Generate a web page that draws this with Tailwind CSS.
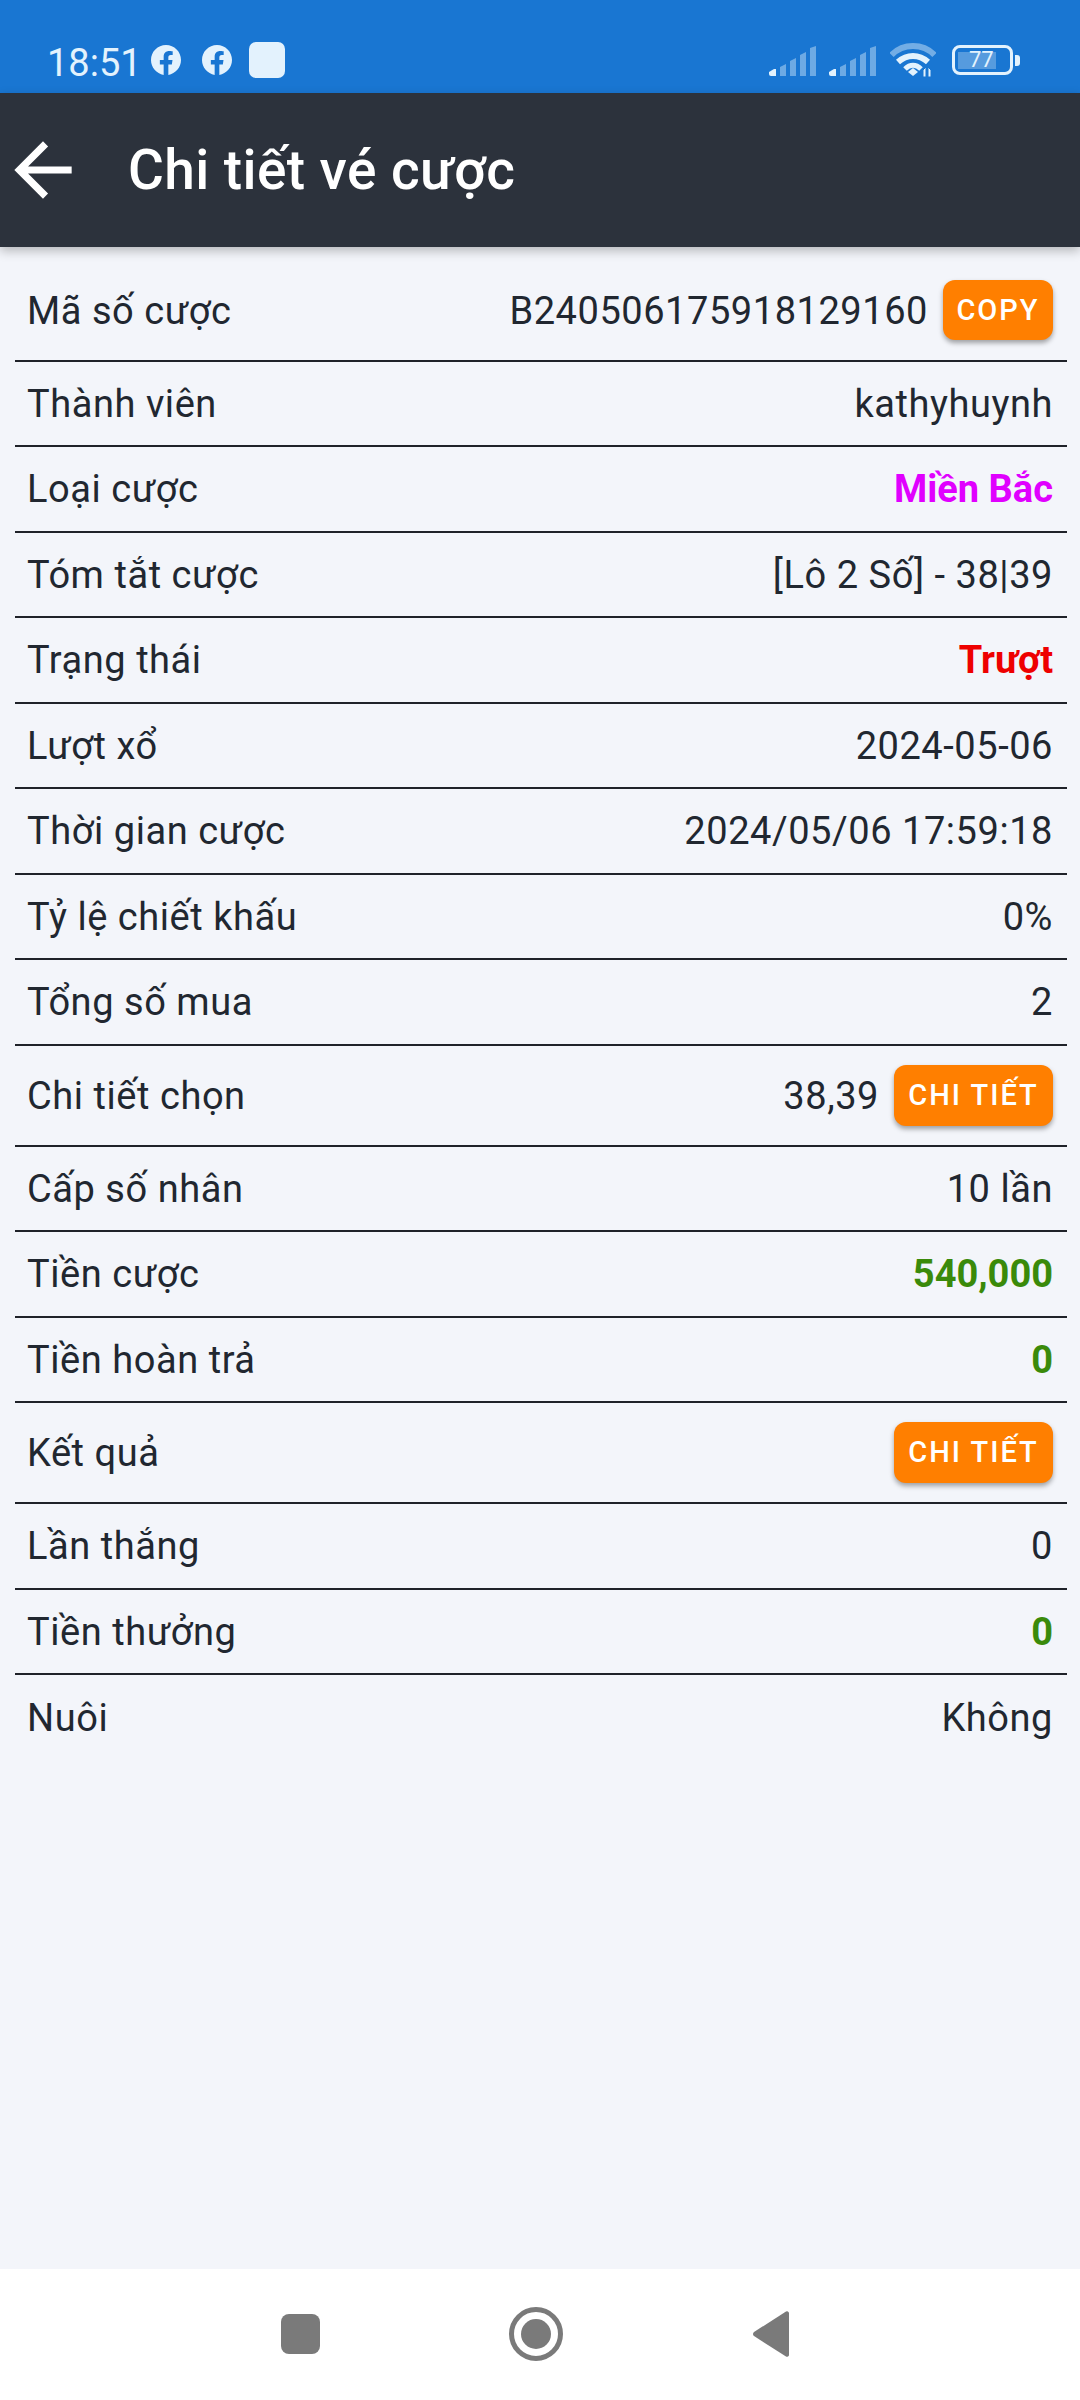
<!DOCTYPE html>
<html lang="vi">
<head>
<meta charset="UTF-8">
<meta name="viewport" content="width=device-width, initial-scale=1.0">
<title>Chi tiết vé cược</title>
<script src="https://cdn.jsdelivr.net/npm/@tailwindcss/browser@4"></script>
</head>
<body class="bg-[#f3f5fa] font-['Roboto',sans-serif] text-[#212730]">
<div class="w-[1080px] h-[2400px] flex flex-col overflow-hidden">

  <!-- status bar -->
  <div class="h-[93px] bg-[#1976d2] flex items-start pt-[42px] pl-[47px] pr-[60px] text-[#e3f2fd] shrink-0">
    <span class="text-[38px] leading-[38px] w-[89px] mt-[2px]">18:51</span>
    <svg class="w-[30px] h-[30px] ml-[15px] mt-[3px]" viewBox="0 0 24 24" fill="#e3f2fd"><path d="M24 12.073c0-6.627-5.373-12-12-12s-12 5.373-12 12c0 5.99 4.388 10.954 10.125 11.854v-8.385H7.078v-3.47h3.047V9.43c0-3.007 1.792-4.669 4.533-4.669 1.312 0 2.686.235 2.686.235v2.953H15.83c-1.491 0-1.956.925-1.956 1.874v2.25h3.328l-.532 3.47h-2.796v8.385C19.612 23.027 24 18.062 24 12.073z"/></svg>
    <svg class="w-[30px] h-[30px] ml-[21px] mt-[3px]" viewBox="0 0 24 24" fill="#e3f2fd"><path d="M24 12.073c0-6.627-5.373-12-12-12s-12 5.373-12 12c0 5.99 4.388 10.954 10.125 11.854v-8.385H7.078v-3.47h3.047V9.43c0-3.007 1.792-4.669 4.533-4.669 1.312 0 2.686.235 2.686.235v2.953H15.83c-1.491 0-1.956.925-1.956 1.874v2.25h3.328l-.532 3.47h-2.796v8.385C19.612 23.027 24 18.062 24 12.073z"/></svg>
    <div class="w-[36px] h-[36px] ml-[17px] rounded-[7px] bg-[#e3f2fd]"></div>

    <div class="ml-auto flex items-start">
      <svg class="w-[48px] h-[30px] mt-[4px]" viewBox="0 0 48 30">
        <path d="M0 26l5-3h2v7H2a2 2 0 0 1-2-2z" fill="#e3f2fd"/>
        <g fill="#e3f2fd" fill-opacity=".42">
          <path d="M11 21l6-3v12h-6z"/><path d="M21 15l6-3v18h-6z"/><path d="M31 9l6-3v24h-6z"/><path d="M41 2l6-2v30h-6z"/>
        </g>
      </svg>
      <svg class="w-[48px] h-[30px] mt-[4px] ml-[12px]" viewBox="0 0 48 30">
        <path d="M0 26l5-3h2v7H2a2 2 0 0 1-2-2z" fill="#e3f2fd"/>
        <g fill="#e3f2fd" fill-opacity=".42">
          <path d="M11 21l6-3v12h-6z"/><path d="M21 15l6-3v18h-6z"/><path d="M31 9l6-3v24h-6z"/><path d="M41 2l6-2v30h-6z"/>
        </g>
      </svg>
      <svg class="w-[46px] h-[34px] ml-[13px] mt-[1px]" viewBox="0 0 46 34" fill="none" stroke-width="6">
        <path d="M1.5 12C13 0 33 0 44.5 12" stroke="#e3f2fd" stroke-opacity=".45"/>
        <path d="M8 19C17 11 29 11 38 19" stroke="#e3f2fd"/>
        <path d="M15 26C20 21 26 21 31 26" stroke="#e3f2fd" stroke-width="5"/>
        <path d="M18 29l5-4 5 4-5 4z" fill="#e3f2fd"/>
        <path d="M33 27l3-3v10h-3zM38 24l3 3h3l-3 0v7h-3z" fill="#e3f2fd" stroke="#1976d2" stroke-width="1"/>
      </svg>
      <div class="ml-[16px] mt-[3px] w-[61px] h-[30px] rounded-[8px] border-[3px] border-[#e3f2fd] relative flex items-center">
        <div class="absolute left-[3px] top-[4px] h-[17px] w-[38px] bg-[#e3f2fd]/30"></div>
        <span class="relative ml-[14px] text-[22px] leading-none">77</span>
      </div>
      <div class="ml-[2px] mt-[13px] w-[5px] h-[11px] rounded-r-[3px] bg-[#e3f2fd]"></div>
    </div>
  </div>

  <!-- app bar -->
  <header class="h-[154px] bg-[#2c323c] shadow-[0_4px_10px_rgba(0,0,0,0.25)] flex items-center text-white shrink-0 relative">
    <svg class="w-[86px] h-[86px] ml-0" viewBox="0 0 24 24" fill="currentColor"><path d="M20 11H7.83l5.59-5.59L12 4l-8 8 8 8 1.41-1.41L7.83 13H20v-2z"/></svg>
    <h1 class="ml-[42px] text-[55px] leading-none font-medium tracking-[0.41px]">Chi tiết vé cược</h1>
  </header>

  <!-- detail rows -->
  <main class="flex-1 pl-[15px] pr-[13px] pt-[13.5px] text-[38px] leading-[44px] tracking-[0.55px]">
    <div class="h-[101px] pt-[1px] flex items-center justify-between border-b-2 border-[#1f2229] pl-[12px] pr-[14px]">
      <span>Mã số cược</span>
      <div class="flex items-center gap-[15px]">
        <span>B240506175918129160</span>
        <button class="-mt-[1px] pb-[1px] h-[60px] w-[110px] rounded-[12px] bg-[#ff7f00] text-white text-[29px] font-medium tracking-[2px] shadow-[0_3px_5px_rgba(0,0,0,0.35)]">COPY</button>
      </div>
    </div>
    <div class="h-[85.5px] pt-[1px] flex items-center justify-between border-b-2 border-[#1f2229] pl-[12px] pr-[14px]"><span>Thành viên</span><span>kathyhuynh</span></div>
    <div class="h-[85.5px] pt-[1px] flex items-center justify-between border-b-2 border-[#1f2229] pl-[12px] pr-[14px]"><span>Loại cược</span><span class="font-bold tracking-normal text-[#e000ff]">Miền Bắc</span></div>
    <div class="h-[85.5px] pt-[1px] flex items-center justify-between border-b-2 border-[#1f2229] pl-[12px] pr-[14px]"><span>Tóm tắt cược</span><span>[Lô 2 Số] - 38|39</span></div>
    <div class="h-[85.5px] pt-[1px] flex items-center justify-between border-b-2 border-[#1f2229] pl-[12px] pr-[14px]"><span>Trạng thái</span><span class="font-bold tracking-normal text-[#ee0000]">Trượt</span></div>
    <div class="h-[85.5px] pt-[1px] flex items-center justify-between border-b-2 border-[#1f2229] pl-[12px] pr-[14px]"><span>Lượt xổ</span><span>2024-05-06</span></div>
    <div class="h-[85.5px] pt-[1px] flex items-center justify-between border-b-2 border-[#1f2229] pl-[12px] pr-[14px]"><span>Thời gian cược</span><span>2024/05/06 17:59:18</span></div>
    <div class="h-[85.5px] pt-[1px] flex items-center justify-between border-b-2 border-[#1f2229] pl-[12px] pr-[14px]"><span>Tỷ lệ chiết khấu</span><span>0%</span></div>
    <div class="h-[85.5px] pt-[1px] flex items-center justify-between border-b-2 border-[#1f2229] pl-[12px] pr-[14px]"><span>Tổng số mua</span><span>2</span></div>
    <div class="h-[101px] pt-[1px] flex items-center justify-between border-b-2 border-[#1f2229] pl-[12px] pr-[14px]">
      <span>Chi tiết chọn</span>
      <div class="flex items-center gap-[15px]">
        <span>38,39</span>
        <button class="-mt-[1px] pb-[1px] h-[61px] w-[159px] rounded-[12px] bg-[#ff7f00] text-white text-[29px] font-medium tracking-[2px] shadow-[0_3px_5px_rgba(0,0,0,0.35)]">CHI TIẾT</button>
      </div>
    </div>
    <div class="h-[85.5px] pt-[1px] flex items-center justify-between border-b-2 border-[#1f2229] pl-[12px] pr-[14px]"><span>Cấp số nhân</span><span>10 lần</span></div>
    <div class="h-[85.5px] pt-[1px] flex items-center justify-between border-b-2 border-[#1f2229] pl-[12px] pr-[14px]"><span>Tiền cược</span><span class="font-bold tracking-normal text-[#3a8a0a]">540,000</span></div>
    <div class="h-[85.5px] pt-[1px] flex items-center justify-between border-b-2 border-[#1f2229] pl-[12px] pr-[14px]"><span>Tiền hoàn trả</span><span class="font-bold tracking-normal text-[#3a8a0a]">0</span></div>
    <div class="h-[101px] pt-[1px] flex items-center justify-between border-b-2 border-[#1f2229] pl-[12px] pr-[14px]">
      <span>Kết quả</span>
      <button class="-mt-[1px] pb-[1px] h-[61px] w-[159px] rounded-[12px] bg-[#ff7f00] text-white text-[29px] font-medium tracking-[2px] shadow-[0_3px_5px_rgba(0,0,0,0.35)]">CHI TIẾT</button>
    </div>
    <div class="h-[85.5px] pt-[1px] flex items-center justify-between border-b-2 border-[#1f2229] pl-[12px] pr-[14px]"><span>Lần thắng</span><span>0</span></div>
    <div class="h-[85.5px] pt-[1px] flex items-center justify-between border-b-2 border-[#1f2229] pl-[12px] pr-[14px]"><span>Tiền thưởng</span><span class="font-bold tracking-normal text-[#3a8a0a]">0</span></div>
    <div class="h-[85.5px] pt-[1px] flex items-center justify-between pl-[12px] pr-[14px]"><span>Nuôi</span><span>Không</span></div>
  </main>

  <!-- nav bar -->
  <nav class="h-[131px] bg-white flex items-center shrink-0 pl-[281px] pb-[2px]">
    <div class="w-[39px] h-[40px] rounded-[8px] bg-[#7a7a7a]"></div>
    <div class="ml-[189px] w-[54px] h-[54px] rounded-full border-[5px] border-[#7a7a7a] flex items-center justify-center">
      <div class="w-[30px] h-[30px] rounded-full bg-[#7a7a7a]"></div>
    </div>
    <svg class="ml-[190px] w-[36px] h-[46px]" viewBox="0 0 36 46" fill="#7a7a7a"><path d="M33 .5a2 2 0 0 1 3 1.5v42a2 2 0 0 1-3 1.5L1 25a2.5 2.5 0 0 1 0-4z"/></svg>
  </nav>
</div>
</body>
</html>
